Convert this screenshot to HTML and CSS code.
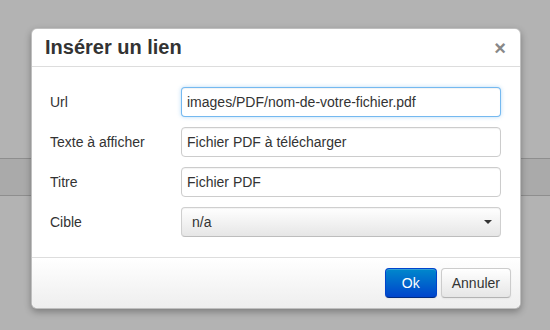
FILE: index.html
```html
<!DOCTYPE html>
<html>
  <head>
    <meta charset="utf-8">
    <link rel="stylesheet" href="styles.css">
  </head>

  <body>
    <div class="page">
      <div class="toolbar"></div>
    </div>

    <div class="modal">
      <div class="modal-header">
        <h3>Insérer un lien</h3>
        <span class="close">&times;</span>
      </div>

      <div class="modal-body">
        <label for="url">Url</label>
        <input id="url" class="field focused" type="text" value="images/PDF/nom-de-votre-fichier.pdf">

        <label for="text">Texte à afficher</label>
        <input id="text" class="field" type="text" value="Fichier PDF à télécharger">

        <label for="title">Titre</label>
        <input id="title" class="field" type="text" value="Fichier PDF">

        <label for="target">Cible</label>
        <div class="select-wrap">
          <select id="target" class="field select">
            <option>n/a</option>
          </select>
          <span class="caret"></span>
        </div>
      </div>

      <div class="modal-footer">
        <button class="btn btn-primary">Ok</button>
        <button class="btn">Annuler</button>
      </div>
    </div>
  </body>
</html>
```

FILE: styles.css
```css
body {
  font-family: "Liberation Sans", Arial, sans-serif;
  font-size: 14px;
  color: #333;
  background-color: #b3b3b3;
  margin: 0;
  padding: 0;
  overflow: hidden;
}

.page {
  height: 330px;
  padding-top: 158px;
  box-sizing: border-box;
}

.toolbar {
  height: 36px;
  background-color: #aaaaaa;
  border-top: 1px solid #8e8e8e;
  border-bottom: 1px solid #8e8e8e;
}

/* dialog sits over the page */
.modal {
  position: absolute;
  top: 28px;
  left: 31px;
  width: 490px;
  background-color: #fff;
  border: 1px solid rgba(0, 0, 0, 0.25);
  border-radius: 6px;
  box-shadow: 0 3px 7px rgba(0, 0, 0, 0.3);
  box-sizing: border-box;
}

.modal-header {
  display: flex;
  align-items: center;
  justify-content: space-between;
  height: 37px;
  padding: 0 14px 0 13px;
  border-bottom: 1px solid #ddd;
}

.modal-header h3 {
  margin: 0;
  font-size: 20px;
  font-weight: bold;
  color: #333;
}

.close {
  font-size: 20px;
  font-weight: bold;
  color: #888;
  line-height: 1;
  cursor: pointer;
}

.modal-body {
  display: grid;
  grid-template-columns: 131px 1fr;
  row-gap: 10px;
  align-items: center;
  padding: 20px 19px 20px 18px;
}

.modal-body label {
  color: #333;
}

.field {
  width: 100%;
  height: 30px;
  margin: 0;
  padding: 0 5px;
  font-family: inherit;
  font-size: 14px;
  color: #333;
  background-color: #fff;
  border: 1px solid #ccc;
  border-radius: 4px;
  box-shadow: inset 0 1px 1px rgba(0, 0, 0, 0.05);
  box-sizing: border-box;
  outline: none;
}

.focused {
  border-color: rgba(82, 168, 236, 0.8);
  box-shadow: inset 0 1px 1px rgba(0, 0, 0, 0.05), 0 0 4px rgba(82, 168, 236, 0.4);
}

.select-wrap {
  position: relative;
}

.select {
  -webkit-appearance: none;
  appearance: none;
  padding-left: 10px;
  background-image: linear-gradient(#ffffff, #e6e6e6);
  border-color: #cfcfcf #cfcfcf #bdbdbd;
}

.caret {
  position: absolute;
  top: 13px;
  right: 9px;
  width: 0;
  height: 0;
  border-top: 4px solid #333;
  border-left: 4px solid transparent;
  border-right: 4px solid transparent;
}

.modal-footer {
  display: flex;
  justify-content: flex-end;
  gap: 4px;
  padding: 10px 9px 10px 10px;
  border-top: 1px solid #ddd;
  border-radius: 0 0 6px 6px;
  background-image: linear-gradient(#ffffff, #eeeeee);
  box-shadow: inset 0 1px 0 #fff;
}

.btn {
  height: 30px;
  padding: 0 10px;
  font-family: inherit;
  font-size: 14px;
  color: #333;
  background-image: linear-gradient(#ffffff, #e6e6e6);
  border: 1px solid #cccccc;
  border-bottom-color: #b3b3b3;
  border-radius: 4px;
  box-shadow: inset 0 1px 0 rgba(255, 255, 255, 0.2), 0 1px 2px rgba(0, 0, 0, 0.05);
  cursor: pointer;
}

.btn-primary {
  width: 52px;
  color: #fff;
  background-image: linear-gradient(#0088cc, #0044cc);
  border-color: #0044cc #0044cc #002a80;
}
```
